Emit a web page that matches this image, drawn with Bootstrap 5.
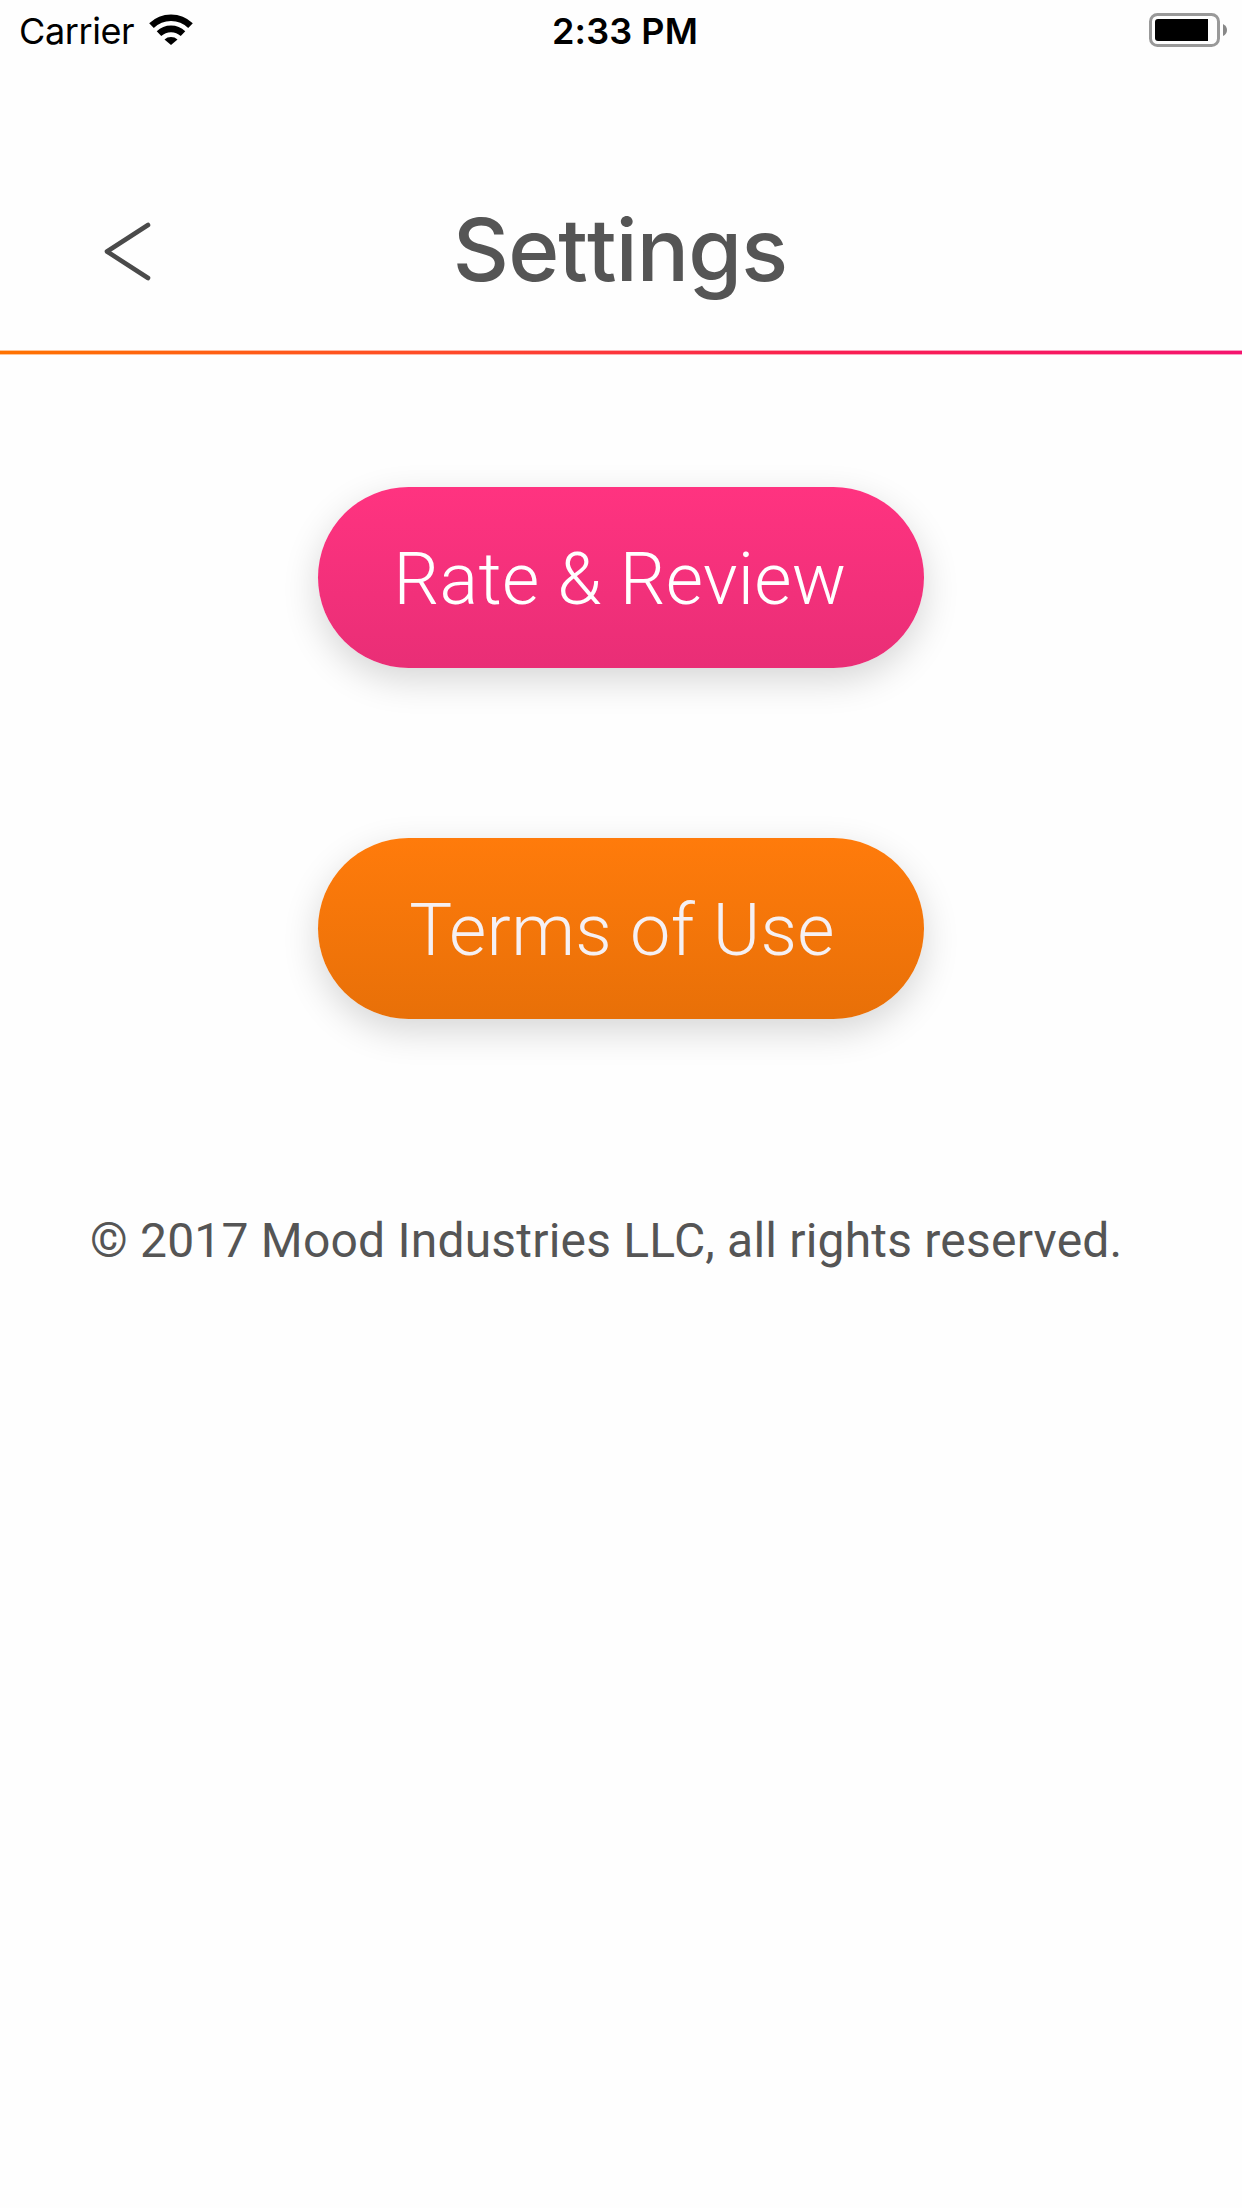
<!DOCTYPE html>
<html lang="en">
<head>
<meta charset="utf-8">
<meta name="viewport" content="width=device-width, initial-scale=1">
<title>Settings</title>
<link href="https://cdn.jsdelivr.net/npm/bootstrap@5.3.0/dist/css/bootstrap.min.css" rel="stylesheet">
<style>
  body { font-family: Roboto, sans-serif; color: #555; background: #fefefe; }
  .status-bar { height: 60px; padding: 9px 14px 7px 19px; font: 400 36px/44px Inter, sans-serif; color: #000; letter-spacing: -.4px; }
  .status-side { flex: 1 1 0; }
  .status-time { font-weight: 600; letter-spacing: .1px; padding-left: 3px; }
  .status-bar .wifi { margin-left: 15px; }
  .status-bar .battery { margin-top: -1px; }
  .title-bar { height: 290px; padding: 136px 104px 0; }
  .title-bar .side { width: 48px; height: 62px; margin-top: 24px; }
  .title-bar h1 { font: 500 87px/106px Inter, sans-serif; letter-spacing: -.9px; font-kerning: none; padding: 1px 2px 0 0; color: #555; }
  .rule-line { height: 5px; background: linear-gradient(90deg, #ff7300, #ff4b28 35%, #fa2050 65%, #f5146e); border: solid rgba(254,254,254,.6); border-width: 1px 0; background-clip: border-box; background-origin: border-box; }
  .actions { padding-top: 132px; gap: 170px; }
  .btn-pill { width: 606px; height: 181px; padding: 4px 0 0; border: 0; font-size: 72px; font-weight: 300; line-height: 85px; border-radius: 90.5px; box-shadow: 0 12px 36px rgba(0,0,0,.16); }
  .btn-rate, .btn-rate:hover { color: #fff; background: linear-gradient(#ff3380, #e92e76); letter-spacing: .3px; padding-right: 2px; }
  .btn-terms, .btn-terms:hover { color: #f5f0f3; background: linear-gradient(#ff7b0b, #e87008); letter-spacing: .32px; padding-left: 2px; }
  .legal { padding: 193px 0 0 90px; font-size: 48px; line-height: 57px; letter-spacing: .2px; }
</style>
</head>
<body>
<header>
  <div class="status-bar d-flex align-items-start">
    <div class="status-side d-flex">
      <span>Carrier</span>
      <svg class="wifi" width="44" height="36" viewBox="0 0 44 36" aria-label="Wi-Fi">
        <g fill="none" stroke="#000" stroke-width="6.6">
          <path d="M2.5 16.6a28 28 0 0 1 39 0"/>
          <path d="M10 24.6a17.5 17.5 0 0 1 24 0"/>
        </g>
        <path d="M15.5 30.4a9.8 9.8 0 0 1 13 0L22 36z"/>
      </svg>
    </div>
    <span class="status-time">2:33 PM</span>
    <div class="status-side d-flex justify-content-end">
      <svg class="battery" width="80" height="44" viewBox="0 0 80 44" aria-label="Battery">
        <rect x="2.5" y="6.5" width="68" height="31" rx="7" fill="none" stroke="#999" stroke-width="3"/>
        <rect x="7" y="11" width="53" height="22" rx="3"/>
        <rect x="55" y="11" width="5" height="22"/>
        <path d="M75 16q4 2 4 6t-4 6z" fill="#888"/>
      </svg>
    </div>
  </div>
  <div class="title-bar d-flex justify-content-between align-items-start">
    <svg class="side" viewBox="0 0 48 62" aria-label="Back"><path d="M44 5 3 31.5 44 58" fill="none" stroke="#4a4a4a" stroke-width="4.6" stroke-linecap="round" stroke-linejoin="round"/></svg>
    <h1 class="m-0">Settings</h1>
    <div class="side"></div>
  </div>
  <div class="rule-line"></div>
</header>
<main>
  <div class="actions d-flex flex-column align-items-center">
    <button type="button" class="btn btn-pill btn-rate">Rate &amp; Review</button>
    <button type="button" class="btn btn-pill btn-terms">Terms of Use</button>
  </div>
  <p class="legal m-0">© 2017 Mood Industries LLC, all rights reserved.</p>
</main>
<script src="https://cdn.jsdelivr.net/npm/bootstrap@5.3.0/dist/js/bootstrap.bundle.min.js"></script>
</body>
</html>
